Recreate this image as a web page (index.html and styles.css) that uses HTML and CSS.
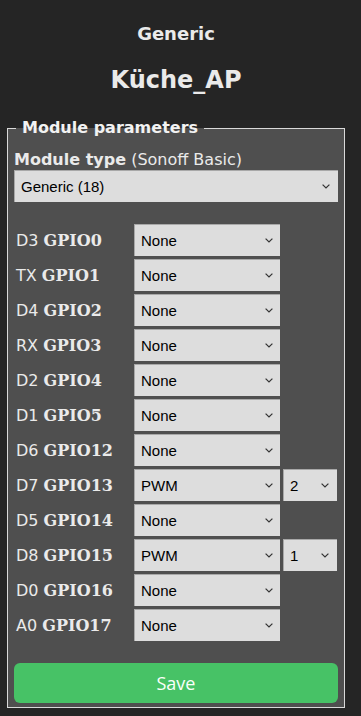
FILE: index.html
```html
<!DOCTYPE html>
<html lang="de">
<head>
<meta charset="utf-8">
<title>Generic - Configure Module</title>
<link rel="stylesheet" href="styles.css">
</head>
<body>
<div class="page">
  <header class="head">
    <h3 class="dev">Generic</h3>
    <h2 class="name">Küche_AP</h2>
  </header>
  <fieldset class="box">
    <legend class="legend">Module parameters</legend>
    <div class="mtype"><b>Module type</b> (Sonoff Basic)</div>
    <select class="sel sel-wide"><option>Generic (18)</option></select>
    <div class="pins">
      <span class="lbl">D3 <b class="gp">GPIO0</b></span><select class="sel sel-pin"><option>None</option></select><span></span>
      <span class="lbl">TX <b class="gp">GPIO1</b></span><select class="sel sel-pin"><option>None</option></select><span></span>
      <span class="lbl">D4 <b class="gp">GPIO2</b></span><select class="sel sel-pin"><option>None</option></select><span></span>
      <span class="lbl">RX <b class="gp">GPIO3</b></span><select class="sel sel-pin"><option>None</option></select><span></span>
      <span class="lbl">D2 <b class="gp">GPIO4</b></span><select class="sel sel-pin"><option>None</option></select><span></span>
      <span class="lbl">D1 <b class="gp">GPIO5</b></span><select class="sel sel-pin"><option>None</option></select><span></span>
      <span class="lbl">D6 <b class="gp">GPIO12</b></span><select class="sel sel-pin"><option>None</option></select><span></span>
      <span class="lbl">D7 <b class="gp">GPIO13</b></span><select class="sel sel-pin"><option>PWM</option></select><select class="sel sel-idx"><option>2</option></select>
      <span class="lbl">D5 <b class="gp">GPIO14</b></span><select class="sel sel-pin"><option>None</option></select><span></span>
      <span class="lbl">D8 <b class="gp">GPIO15</b></span><select class="sel sel-pin"><option>PWM</option></select><select class="sel sel-idx"><option>1</option></select>
      <span class="lbl">D0 <b class="gp">GPIO16</b></span><select class="sel sel-pin"><option>None</option></select><span></span>
      <span class="lbl">A0 <b class="gp">GPIO17</b></span><select class="sel sel-pin"><option>None</option></select><span></span>
    </div>
    <button class="save" type="button">Save</button>
  </fieldset>
</div>
</body>
</html>
```

FILE: styles.css
```css
html, body {
  margin: 0;
  padding: 0;
  background: #252525;
}
body {
  color: #eaeaea;
  font-family: "DejaVu Sans", Verdana, sans-serif;
  font-size: 16px;
}
.page {
  width: 338px;
  margin: 0 0 0 7px;
}
.head {
  text-align: center;
  padding-top: 23px;
}
.dev {
  margin: 0;
  font-size: 18px;
  line-height: 22px;
  font-weight: bold;
}
.name {
  margin: 21px 0 0;
  font-size: 24px;
  line-height: 28px;
  font-weight: bold;
}
.box {
  margin: 24px 0 0;
  padding: 0 6px 4px;
  border: 1px solid #d9d9d9;
  background: #4f4f4f;
  min-width: 0;
}
.legend {
  margin-left: 2px;
  padding: 0 6px;
  font-weight: bold;
  font-size: 16px;
  line-height: 20px;
  color: #f2f2f2;
}
.mtype {
  margin-top: 12px;
  line-height: 20px;
}
.sel {
  display: block;
  height: 32px;
  margin: 0;
  border: none;
  border-radius: 0;
  -webkit-appearance: none;
  appearance: none;
  background-color: #dddddd;
  background-image: url("data:image/svg+xml,%3Csvg xmlns='http://www.w3.org/2000/svg' width='8' height='5' viewBox='0 0 8 5'%3E%3Cpolyline points='0.6,0.6 4,4 7.4,0.6' fill='none' stroke='%23333' stroke-width='1.2'/%3E%3C/svg%3E");
  background-repeat: no-repeat;
  background-position: right 7px center;
  color: #000;
  font-family: "Liberation Sans", Arial, sans-serif;
  font-size: 15px;
  padding: 0 4px 0 7px;
  box-shadow: inset 1px 1px 0 #a8a8a8;
  outline: none;
}
.sel-wide {
  width: 324px;
  background-position: right 8px center;
}
.pins {
  margin-top: 22px;
  display: grid;
  grid-template-columns: 117px 146px 54px;
  column-gap: 3px;
  row-gap: 3px;
  align-items: center;
}
.sel-pin {
  width: 146px;
}
.sel-idx {
  width: 54px;
  background-position: right 8px center;
}
.lbl {
  padding-left: 2px;
  white-space: nowrap;
  font-size: 16px;
}
.gp {
  font-family: "DejaVu Serif", Georgia, serif;
  font-weight: bold;
  font-size: 16px;
}
.save {
  display: block;
  width: 324px;
  height: 40px;
  margin-top: 22px;
  border: none;
  border-radius: 6px;
  background: #47c266;
  color: #fafffa;
  font-family: "Open Sans", sans-serif;
  font-size: 18px;
  padding: 0;
}
```
